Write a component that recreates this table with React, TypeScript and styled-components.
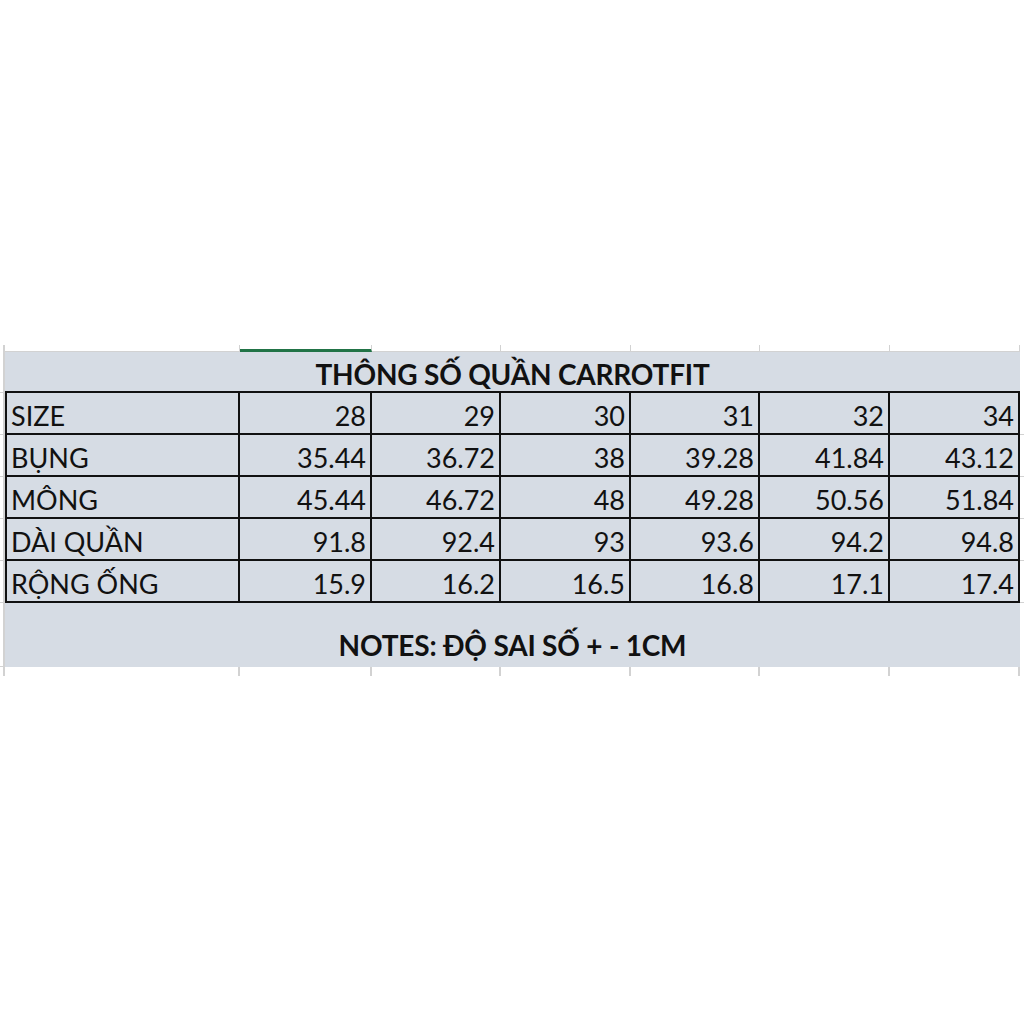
import styled, { createGlobalStyle } from "styled-components";

const GlobalStyle = createGlobalStyle`
  html, body {
    margin: 0;
    padding: 0;
    background: #ffffff;
  }
  body {
    font-family: "Lato", "Noto Sans", sans-serif;
    color: #111111;
  }
`;

const COLS = "5px 235px 132px 129px 130px 129px 130px 130px 4px";
const SHADE = "#d6dce4";
const GRID = "#d2d2d2";
const INK = "#111111";

const Page = styled.div`
  width: 1024px;
  height: 1024px;
  padding-top: 345px;
  box-sizing: border-box;
`;

const Row = styled.div<{ $h: number }>`
  display: grid;
  grid-template-columns: ${COLS};
  height: ${(p) => p.$h}px;
`;

const Gutter = styled.div<{ $right?: boolean; $tick?: boolean }>`
  box-sizing: border-box;
  border-right: ${(p) => (p.$right ? "none" : `2px solid ${GRID}`)};
  border-bottom: ${(p) => (p.$tick ? `1px solid ${GRID}` : "none")};
`;

const GhostCell = styled.div<{ $active?: boolean }>`
  box-sizing: border-box;
  border-right: 1px solid ${GRID};
  border-bottom: ${(p) => (p.$active ? "3px solid #217346" : `1px solid ${GRID}`)};
`;

const StubCell = styled.div`
  box-sizing: border-box;
  border-right: 2px solid ${GRID};
`;

const Banner = styled.div<{ $align: "center" | "flex-end"; $pad: number; $top?: number; $bottom?: boolean }>`
  grid-column: 2 / span 7;
  background: ${SHADE};
  display: flex;
  justify-content: center;
  align-items: ${(p) => p.$align};
  padding-top: ${(p) => p.$top ?? 0}px;
  padding-bottom: ${(p) => p.$pad}px;
  box-sizing: border-box;
  border-bottom: ${(p) => (p.$bottom ? `2px solid ${INK}` : "none")};
  font-weight: 700;
  font-size: 28px;
  letter-spacing: -0.2px;
  color: ${INK};
`;

const Cell = styled.div<{ $label?: boolean }>`
  background: ${SHADE};
  box-sizing: border-box;
  border-right: 2px solid ${INK};
  border-bottom: 2px solid ${INK};
  border-left: ${(p) => (p.$label ? `2px solid ${INK}` : "none")};
  display: flex;
  align-items: center;
  justify-content: ${(p) => (p.$label ? "flex-start" : "flex-end")};
  padding: 5px ${(p) => (p.$label ? "0" : "4px")} 0 ${(p) => (p.$label ? "4px" : "0")};
  font-size: 27px;
  color: ${INK};
  white-space: nowrap;
`;

const rows: [string, string[]][] = [
  ["SIZE", ["28", "29", "30", "31", "32", "34"]],
  ["BỤNG", ["35.44", "36.72", "38", "39.28", "41.84", "43.12"]],
  ["MÔNG", ["45.44", "46.72", "48", "49.28", "50.56", "51.84"]],
  ["DÀI QUẦN", ["91.8", "92.4", "93", "93.6", "94.2", "94.8"]],
  ["RỘNG ỐNG", ["15.9", "16.2", "16.5", "16.8", "17.1", "17.4"]],
];

const columns = [0, 1, 2, 3, 4, 5, 6];

export default function App() {
  return (
    <Page>
      <GlobalStyle />
      <Row $h={7}>
        <Gutter />
        {columns.map((c) => (
          <GhostCell key={c} $active={c === 1} />
        ))}
        <Gutter $right />
      </Row>
      <Row $h={41}>
        <Gutter $tick />
        <Banner $align="center" $pad={0} $top={4} $bottom>
          THÔNG SỐ QUẦN CARROTFIT
        </Banner>
      </Row>
      {rows.map(([label, values]) => (
        <Row $h={42} key={label}>
          <Gutter $tick />
          <Cell $label>{label}</Cell>
          {values.map((v, i) => (
            <Cell key={i}>{v}</Cell>
          ))}
          <Gutter $right $tick />
        </Row>
      ))}
      <Row $h={64}>
        <Gutter $tick />
        <Banner $align="flex-end" $pad={5}>
          NOTES: ĐỘ SAI SỐ + - 1CM
        </Banner>
      </Row>
      <Row $h={9}>
        <Gutter />
        {columns.map((c) => (
          <StubCell key={c} />
        ))}
        <Gutter $right />
      </Row>
    </Page>
  );
}
